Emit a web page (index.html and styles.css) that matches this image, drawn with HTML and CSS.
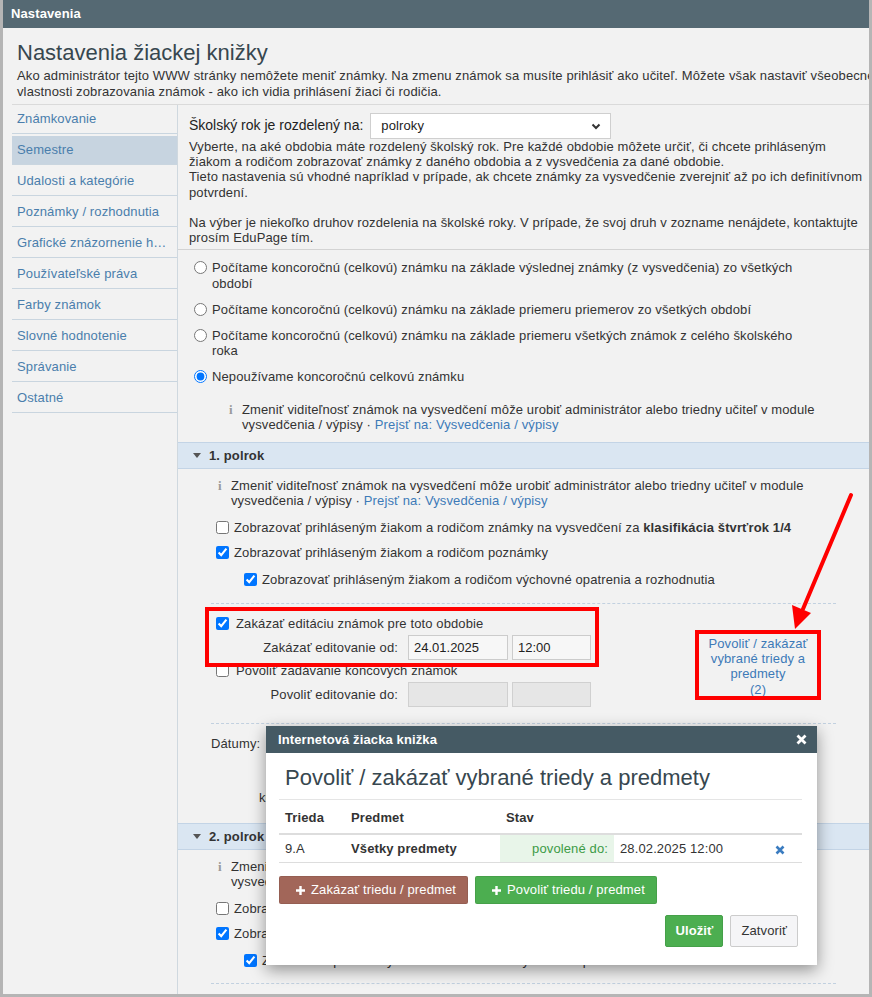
FILE: index.html
```html
<!DOCTYPE html>
<html lang="sk">
<head>
    <meta charset="UTF-8">
    <meta name="viewport" content="width=device-width, initial-scale=1.0">
    <title>Nastavenia žiackej knižky</title>
    <link rel="stylesheet" href="styles.css">
</head>
<body>
<div class="frame">
    <div class="topbar">Nastavenia</div>

    <div class="page-head">
        <h1>Nastavenia žiackej knižky</h1>
        <p>Ako administrátor tejto WWW stránky nemôžete meniť známky. Na zmenu známok sa musíte prihlásiť ako učiteľ. Môžete však nastaviť všeobecné<br>vlastnosti zobrazovania známok - ako ich vidia prihlásení žiaci či rodičia.</p>
    </div>

    <div class="main">
        <ul class="side-menu">
            <li><a href="#">Známkovanie</a></li>
            <li class="active"><a href="#">Semestre</a></li>
            <li><a href="#">Udalosti a kategórie</a></li>
            <li><a href="#">Poznámky / rozhodnutia</a></li>
            <li><a href="#">Grafické znázornenie hodnotenia</a></li>
            <li><a href="#">Používateľské práva</a></li>
            <li><a href="#">Farby známok</a></li>
            <li><a href="#">Slovné hodnotenie</a></li>
            <li><a href="#">Správanie</a></li>
            <li><a href="#">Ostatné</a></li>
        </ul>

        <div class="content">
            <div class="year-box">
                <div class="year-row">
                    <label>Školský rok je rozdelený na:</label>
                    <div class="select">
                        <span>polroky</span>
                        <svg width="10" height="7" viewBox="0 0 10 7"><path d="M1.5 1.5 L5 5 L8.5 1.5" fill="none" stroke="#333" stroke-width="2"/></svg>
                    </div>
                </div>
                <p>Vyberte, na aké obdobia máte rozdelený školský rok. Pre každé obdobie môžete určiť, či chcete prihláseným žiakom a rodičom zobrazovať známky z daného obdobia a z vysvedčenia za dané obdobie.<br>Tieto nastavenia sú vhodné napríklad v prípade, ak chcete známky za vysvedčenie zverejniť až po ich definitívnom potvrdení.<br><br>Na výber je niekoľko druhov rozdelenia na školské roky. V prípade, že svoj druh v zozname nenájdete, kontaktujte prosím EduPage tím.</p>
            </div>

            <div class="final-grade">
                <label class="opt"><input type="radio" name="final"><span>Počítame koncoročnú (celkovú) známku na základe výslednej známky (z vysvedčenia) zo všetkých období</span></label>
                <label class="opt"><input type="radio" name="final"><span>Počítame koncoročnú (celkovú) známku na základe priemeru priemerov zo všetkých období</span></label>
                <label class="opt"><input type="radio" name="final"><span>Počítame koncoročnú (celkovú) známku na základe priemeru všetkých známok z celého školského roka</span></label>
                <label class="opt"><input type="radio" name="final" checked><span>Nepoužívame koncoročnú celkovú známku</span></label>
                <div class="info">
                    <span class="info-ico">i</span>
                    <span>Zmeniť viditeľnosť známok na vysvedčení môže urobiť administrátor alebo triedny učiteľ v module vysvedčenia / výpisy · <a href="#">Prejsť na: Vysvedčenia / výpisy</a></span>
                </div>
            </div>

            <div class="period">
                <div class="period-head"><span class="caret"></span>1. polrok</div>
                <div class="period-body">
                    <div class="group group-a">
                        <div class="info">
                            <span class="info-ico">i</span>
                            <span>Zmeniť viditeľnosť známok na vysvedčení môže urobiť administrátor alebo triedny učiteľ v module vysvedčenia / výpisy · <a href="#">Prejsť na: Vysvedčenia / výpisy</a></span>
                        </div>
                        <label class="check"><input type="checkbox"><span>Zobrazovať prihláseným žiakom a rodičom známky na vysvedčení za <b>klasifikácia štvrťrok 1/4</b></span></label>
                        <label class="check"><input type="checkbox" checked><span>Zobrazovať prihláseným žiakom a rodičom poznámky</span></label>
                        <label class="check sub"><input type="checkbox" checked><span>Zobrazovať prihláseným žiakom a rodičom výchovné opatrenia a rozhodnutia</span></label>
                    </div>

                    <div class="group edit-block">
                        <div class="edit-fields">
                            <label class="check"><input type="checkbox" checked><span>Zakázať editáciu známok pre toto obdobie</span></label>
                            <div class="field-row">
                                <span class="field-label">Zakázať editovanie od:</span>
                                <input class="inp date" type="text" value="24.01.2025">
                                <input class="inp time" type="text" value="12:00">
                            </div>
                            <label class="check"><input type="checkbox"><span>Povoliť zadávanie koncových známok</span></label>
                            <div class="field-row">
                                <span class="field-label">Povoliť editovanie do:</span>
                                <input class="inp date" type="text" disabled>
                                <input class="inp time" type="text" disabled>
                            </div>
                        </div>
                        <a href="#" class="except-link">Povoliť / zakázať vybrané triedy a predmety<br>(2)</a>
                    </div>

                    <div class="dates">
                        <div class="dates-row">
                            <span class="dates-label">Dátumy:</span>
                            <span>začiatok 01.09.2024 &ndash; koniec 31.01.2025</span>
                        </div>
                        <div class="dates-next">klasifikácia do: 24.01.2025</div>
                    </div>
                </div>
            </div>

            <div class="period">
                <div class="period-head"><span class="caret"></span>2. polrok</div>
                <div class="period-body">
                    <div class="group group-a">
                        <div class="info">
                            <span class="info-ico">i</span>
                            <span>Zmeniť viditeľnosť známok na vysvedčení môže urobiť administrátor alebo triedny učiteľ v module vysvedčenia / výpisy · <a href="#">Prejsť na: Vysvedčenia / výpisy</a></span>
                        </div>
                        <label class="check"><input type="checkbox"><span>Zobrazovať prihláseným žiakom a rodičom známky na vysvedčení za <b>klasifikácia štvrťrok 3/4</b></span></label>
                        <label class="check"><input type="checkbox" checked><span>Zobrazovať prihláseným žiakom a rodičom poznámky</span></label>
                        <label class="check sub"><input type="checkbox" checked><span>Zobrazovať prihláseným žiakom a rodičom výchovné opatrenia a rozhodnutia</span></label>
                    </div>
                </div>
            </div>
        </div>
    </div>

    <!-- annotations -->
    <div class="mark mark-edit"></div>
    <div class="mark mark-link"></div>
    <svg class="arrow" width="872" height="997" viewBox="0 0 872 997">
        <line x1="851" y1="495" x2="803" y2="609" stroke="#f00" stroke-width="4" stroke-linecap="round"/>
        <polygon points="795,629 792,605 811,613" fill="#f00"/>
    </svg>

    <div class="dialog">
        <div class="dialog-head">
            <span>Internetová žiacka knižka</span>
            <svg width="11" height="11" viewBox="0 0 11 11"><path d="M1.5 1.5 L9.5 9.5 M9.5 1.5 L1.5 9.5" stroke="#fff" stroke-width="2.8"/></svg>
        </div>
        <div class="dialog-body">
            <h2>Povoliť / zakázať vybrané triedy a predmety</h2>
            <table class="rules">
                <colgroup>
                    <col style="width: 66px">
                    <col style="width: 155px">
                    <col style="width: 114px">
                    <col style="width: 155px">
                    <col>
                </colgroup>
                <thead>
                    <tr><th>Trieda</th><th>Predmet</th><th>Stav</th><th></th><th></th></tr>
                </thead>
                <tbody>
                    <tr>
                        <td>9.A</td>
                        <td><b>Všetky predmety</b></td>
                        <td class="state">povolené do:</td>
                        <td>28.02.2025 12:00</td>
                        <td><svg width="10" height="10" viewBox="0 0 10 10"><path d="M1.5 1.5 L8.5 8.5 M8.5 1.5 L1.5 8.5" stroke="#3a7cc0" stroke-width="2.6"/></svg></td>
                    </tr>
                </tbody>
            </table>
            <div class="dialog-tools">
                <button class="btn btn-ban"><svg width="9" height="9" viewBox="0 0 9 9"><path d="M4.5 0 V9 M0 4.5 H9" stroke="#fff" stroke-width="2.4"/></svg>Zakázať triedu / predmet</button>
                <button class="btn btn-allow"><svg width="9" height="9" viewBox="0 0 9 9"><path d="M4.5 0 V9 M0 4.5 H9" stroke="#fff" stroke-width="2.4"/></svg>Povoliť triedu / predmet</button>
            </div>
            <div class="dialog-foot">
                <button class="btn-save">Uložiť</button>
                <button class="btn-close">Zatvoriť</button>
            </div>
        </div>
    </div>
</div>
</body>
</html>
```

FILE: styles.css
```css
* {
    box-sizing: border-box;
}
html, body {
    margin: 0;
}
body {
    font-family: "Liberation Sans", Arial, sans-serif;
    font-size: 13px;
    line-height: 15.2px;
    letter-spacing: 0.12px;
    color: #333;
    background: #fff;
}
a {
    color: #3d7ab8;
    text-decoration: none;
}
.frame {
    position: relative;
    height: 997px;
    display: flex;
    flex-direction: column;
    background: #f2f2f2;
    border: 3px solid #b5b5b5;
    border-top: 0;
    overflow: hidden;
}
.topbar {
    height: 28px;
    line-height: 28px;
    padding-left: 8px;
    background: #556973;
    color: #fff;
    font-weight: bold;
}
.page-head {
    padding: 12px 14px 4px;
}
.page-head h1 {
    margin: 0;
    font-size: 22px;
    line-height: 26px;
    font-weight: normal;
    letter-spacing: 0;
    color: #37474f;
}
.page-head p {
    margin: 2px 0 0;
    line-height: 16px;
    white-space: nowrap;
}
.main {
    flex: 1;
    display: flex;
    margin-left: 9px;
    border-top: 1px solid #dadada;
}

/* left menu */
.side-menu {
    width: 166px;
    flex: none;
    margin: 0;
    padding: 0;
    list-style: none;
    border-right: 1px solid #cfd8df;
}
.side-menu li {
    border-bottom: 1px solid #c9d5df;
}
.side-menu li + li {
    margin-top: 2px;
}
.side-menu a {
    display: block;
    height: 28px;
    line-height: 28px;
    padding: 0 10px 0 5px;
    color: #4a7eac;
    white-space: nowrap;
    overflow: hidden;
    text-overflow: ellipsis;
}
.side-menu .active a {
    background: #c7d4e0;
}

.content {
    flex: 1;
    min-width: 0;
}
.year-box {
    padding: 8px 5px 4px 11px;
    border-bottom: 1px solid #d3d3d3;
}
.year-row {
    display: flex;
    align-items: center;
    height: 26px;
}
.year-row label {
    font-size: 14px;
    letter-spacing: 0;
    color: #222;
}
.select {
    margin-left: 7px;
    width: 241px;
    height: 26px;
    display: flex;
    align-items: center;
    justify-content: space-between;
    padding: 0 9px 0 10px;
    background: #fff;
    border: 1px solid #cfcfcf;
    color: #222;
}
.year-box p {
    margin: 0;
}

/* final grade options */
.final-grade {
    padding: 10px 0 10px 16px;
}
.opt {
    display: flex;
    align-items: flex-start;
    max-width: 615px;
    margin-bottom: 11px;
}
.opt input {
    flex: none;
    width: 13px;
    height: 13px;
    margin: 1px 5px 0 0;
}
.info {
    display: flex;
    max-width: 613px;
    margin: 17px 0 0 35px;
}
.info-ico {
    flex: none;
    width: 13px;
    font-family: "Liberation Serif", serif;
    font-weight: bold;
    color: #9a9a9a;
}

/* periods */
.period-head {
    height: 27px;
    line-height: 25px;
    padding-left: 15px;
    background: #dae6f2;
    border-top: 1px solid #c3d4e6;
    border-bottom: 1px solid #c3d4e6;
    font-weight: bold;
    color: #333;
}
.caret {
    display: inline-block;
    vertical-align: middle;
    width: 0;
    height: 0;
    margin: -2px 8px 0 0;
    border-left: 4px solid transparent;
    border-right: 4px solid transparent;
    border-top: 5px solid #555;
}
.period-body {
    padding: 0 33px;
}
.group {
    border-bottom: 1px dashed #c2d1e0;
}
.group-a {
    padding: 9px 0 15px;
}
.group-a .info {
    margin: 0 0 0 7px;
}
.check {
    display: flex;
    align-items: flex-start;
}
.check input {
    flex: none;
    width: 13px;
    height: 13px;
    margin: 1px 5px 0 5px;
}
.group-a .check {
    margin-top: 10px;
}
.group-a .info + .check {
    margin-top: 11.5px;
}
.group-a .check.sub {
    margin-top: 12px;
    margin-left: 28px;
}

.edit-block {
    display: flex;
    padding: 12.5px 0 16px;
}
.edit-fields {
    flex: 1;
}
.edit-fields .check input {
    margin-right: 7px;
}
.edit-fields > * + * {
    margin-top: 3.5px;
}
.field-row {
    display: flex;
    align-items: center;
}
.field-label {
    width: 187px;
    margin-right: 10px;
    text-align: right;
}
.inp {
    height: 25px;
    margin: 0;
    padding: 0 5px;
    border: 1px solid #ccc;
    background: #f7f7f7;
    font: inherit;
    color: #222;
}
.inp.date {
    width: 100px;
}
.inp.time {
    width: 79px;
    margin-left: 4px;
}
.inp:disabled {
    background: #e6e6e6;
    border-color: #d0d0d0;
}
.except-link {
    flex: none;
    width: 120px;
    margin: 20px 18px 0 0;
    text-align: center;
}

.dates {
    padding: 12.5px 0 17.4px;
}
.dates-row {
    display: flex;
}
.dates-label {
    width: 55px;
}
.dates-next {
    margin-top: 38.6px;
    padding-left: 48px;
}

/* red annotations */
.mark {
    position: absolute;
    border: 4px solid #f00;
}
.mark-edit {
    left: 202px;
    top: 607px;
    width: 394px;
    height: 60px;
}
.mark-link {
    left: 692px;
    top: 630px;
    width: 126px;
    height: 70px;
}
.arrow {
    position: absolute;
    left: -3px;
    top: 0;
}

/* dialog */
.dialog {
    position: absolute;
    left: 263px;
    top: 726px;
    width: 551px;
    background: #fff;
    box-shadow: 0 5px 15px rgba(0, 0, 0, 0.4);
}
.dialog-head {
    height: 27px;
    display: flex;
    align-items: center;
    justify-content: space-between;
    padding: 0 10px 0 12px;
    background: #455a64;
    color: #fff;
    font-weight: bold;
}
.dialog-body {
    padding: 12px 15px 18px 13px;
}
.dialog-body h2 {
    margin: 0;
    padding: 0 6px 8px;
    font-size: 22px;
    line-height: 26px;
    font-weight: normal;
    letter-spacing: 0;
    color: #37474f;
    border-bottom: 1px solid #e5e5e5;
}
.rules {
    width: 100%;
    border-collapse: collapse;
    table-layout: fixed;
}
.rules th {
    padding: 10px 6px 8px;
    line-height: 15px;
    text-align: left;
    border-bottom: 2px solid #ddd;
}
.rules td {
    padding: 6px;
    line-height: 15px;
    border-bottom: 1px solid #ddd;
}
.rules td svg {
    display: block;
    margin-top: 2px;
}
.rules .state {
    background: #e8f5e9;
    color: #3d9b46;
    text-align: right;
}
.dialog-tools {
    display: flex;
    gap: 7px;
    margin-top: 13px;
}
.btn, .btn-save, .btn-close {
    font: inherit;
    letter-spacing: inherit;
    margin: 0;
    border-radius: 2px;
    cursor: pointer;
}
.btn {
    display: inline-flex;
    align-items: center;
    height: 28px;
    padding: 0 11px 0 16px;
    border: 1px solid rgba(0, 0, 0, 0.08);
    color: #fff;
}
.btn svg {
    margin-right: 6px;
}
.btn-ban {
    background: #a26659;
}
.btn-allow {
    background: #4cae50;
}
.dialog-foot {
    display: flex;
    justify-content: flex-end;
    gap: 7px;
    margin-top: 11px;
    padding-right: 4px;
}
.btn-save {
    height: 32px;
    padding: 0 9px;
    border: 1px solid #45a049;
    background: #4cae50;
    color: #fff;
    font-weight: bold;
}
.btn-close {
    height: 32px;
    padding: 0 10px;
    border: 1px solid #ccc;
    background: #f5f5f7;
    color: #333;
}
```
